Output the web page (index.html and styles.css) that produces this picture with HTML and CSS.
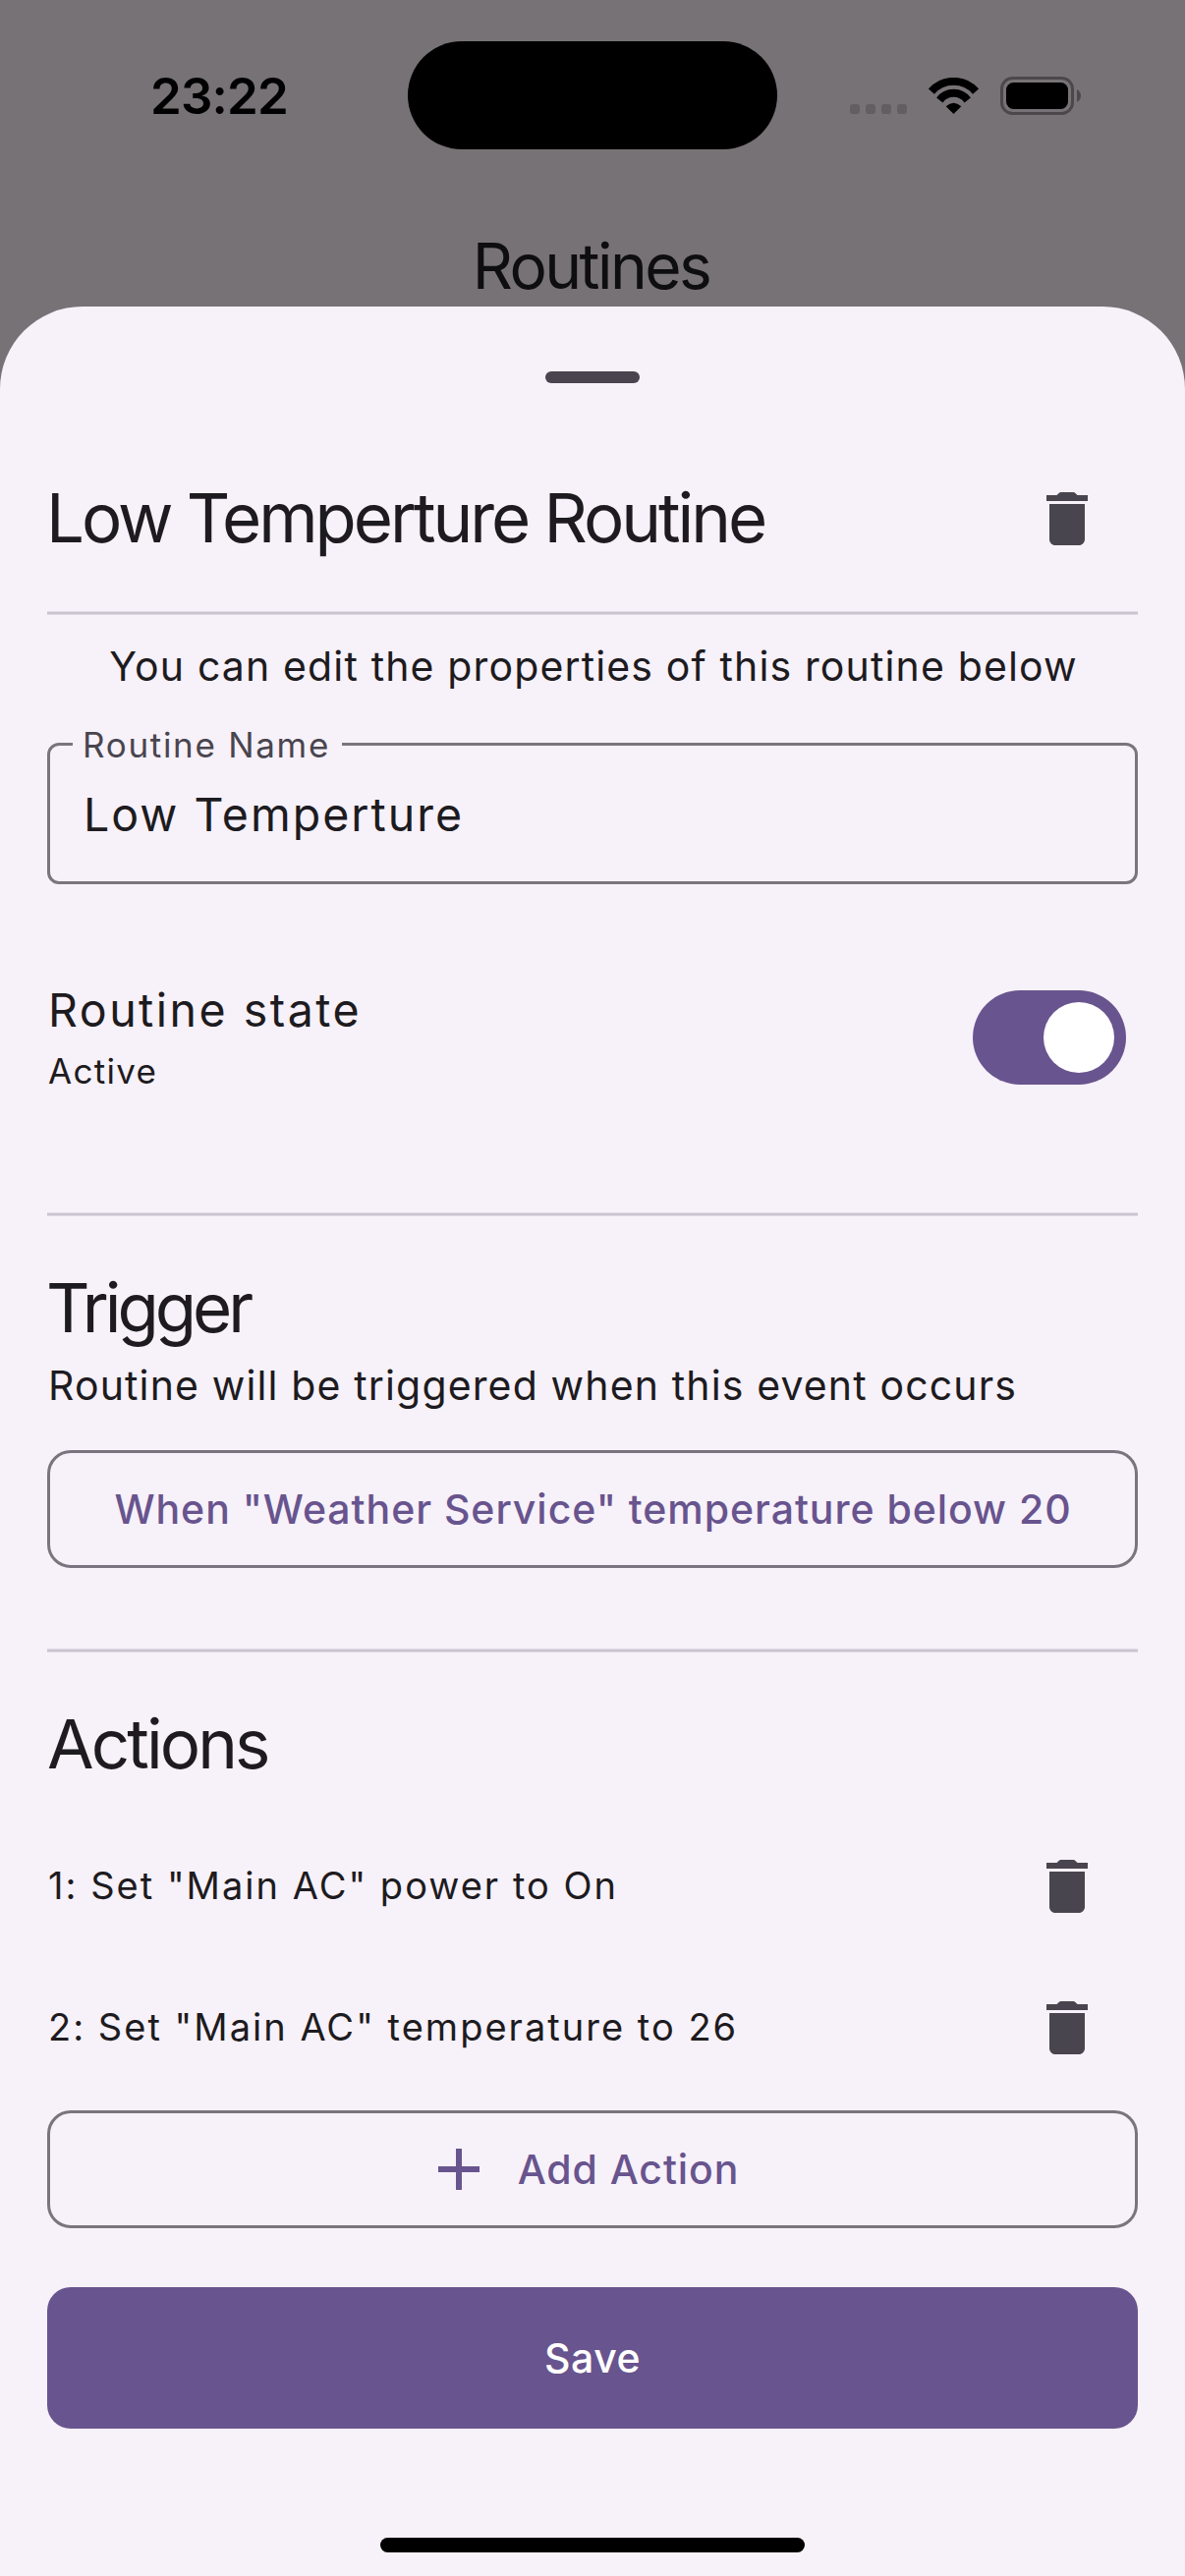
FILE: index.html
```
<!DOCTYPE html>
<html lang="en">
<head>
<meta charset="utf-8">
<title>Routines</title>
<link rel="stylesheet" href="styles.css">
</head>
<body>
<svg class="defs" width="0" height="0">
  <symbol id="trash" viewBox="0 0 24 24"><path d="M6 19c0 1.1.9 2 2 2h8c1.1 0 2-.9 2-2V7H6v12zM19 4h-3.5l-.7-.7c-.2-.2-.45-.3-.7-.3H9.9c-.25 0-.5.1-.7.3l-.7.7H5v2h14V4z"/></symbol>
  <symbol id="plus" viewBox="0 0 24 24"><path d="M19 13h-6v6h-2v-6H5v-2h6V5h2v6h6v2z"/></symbol>
</svg>
<header class="backdrop">
  <div class="status">
    <div class="time">23:22</div>
    <div class="island"></div>
    <div class="indicators">
      <svg class="cell" viewBox="0 0 58 10"><rect width="10" height="10" rx="3"/><rect x="16" width="10" height="10" rx="3"/><rect x="32" width="10" height="10" rx="3"/><rect x="48" width="10" height="10" rx="3"/></svg>
      <svg class="wifi" viewBox="0 0 51 37"><g fill="none" stroke="#000" stroke-width="8"><path d="M2.9 14.1A30 30 0 0 1 48.1 14.1"/><path d="M11.3 23A17.7 17.7 0 0 1 39.7 23"/></g><path d="M17.7 29.3Q25.5 22.3 33.3 29.3L25.5 37z"/></svg>
      <svg class="battery" viewBox="0 0 82 39"><rect x="1.5" y="1.5" width="72" height="36" rx="11" fill="none" stroke="#4b484b" stroke-width="3"/><rect x="6" y="6" width="63" height="27" rx="7.5"/><path d="M78 13Q82 15.5 82 19.5T78 26z" fill="#4b484b"/></svg>
    </div>
  </div>
  <h1 class="page-title">Routines</h1>
</header>
<main class="sheet">
  <div class="grip"></div>
  <div class="row">
    <h2 class="heading name">Low Temperture Routine</h2>
    <button class="icon-button"><svg class="icon"><use href="#trash"/></svg></button>
  </div>
  <div class="divider"></div>
  <p class="intro">You can edit the properties of this routine below</p>
  <div class="field">
    <div class="field-label">Routine Name</div>
    <div class="field-value">Low Temperture</div>
  </div>
  <div class="state">
    <div>
      <div class="state-title">Routine state</div>
      <div class="state-value">Active</div>
    </div>
    <div class="switch"><div class="thumb"></div></div>
  </div>
  <div class="divider"></div>
  <h2 class="heading trigger">Trigger</h2>
  <p class="description">Routine will be triggered when this event occurs</p>
  <button class="outlined event">When "Weather Service" temperature below 20</button>
  <div class="divider"></div>
  <h2 class="heading actions">Actions</h2>
  <div class="action-list">
    <div class="row">
      <span class="action">1: Set "Main AC" power to On</span>
      <button class="icon-button"><svg class="icon"><use href="#trash"/></svg></button>
    </div>
    <div class="row">
      <span class="action">2: Set "Main AC" temperature to 26</span>
      <button class="icon-button"><svg class="icon"><use href="#trash"/></svg></button>
    </div>
  </div>
  <button class="outlined add"><svg class="icon"><use href="#plus"/></svg>Add Action</button>
  <button class="save">Save</button>
  <div class="home-indicator"></div>
</main>
</body>
</html>
```
FILE: styles.css
```
* { box-sizing: border-box; }
body {
  margin: 0;
  width: 1206px;
  height: 2622px;
  display: flex;
  flex-direction: column;
  background: #777275;
  color: #1d1b20;
  font-family: Inter, "Liberation Sans", sans-serif;
  white-space: nowrap;
  overflow: hidden;
}
h1, h2, p { margin: 0; font-weight: 400; }
button { font-family: inherit; padding: 0; border: 0; background: none; }
svg { display: block; }
.defs { position: absolute; }

.backdrop { height: 312px; flex: none; }
.status {
  display: grid;
  grid-template-columns: 415px 376px 415px;
  align-items: center;
  padding-top: 42px;
  color: #000;
}
.time {
  padding: 2px 0 0 153px;
  font-size: 51px;
  line-height: 60px;
  font-weight: 600;
  letter-spacing: -0.8px;
}
.island { height: 110px; border-radius: 55px; background: #000; }
.indicators { display: flex; align-items: center; padding-left: 74px; }
.cell { width: 58px; height: 10px; margin: 28px 22px 0 0; fill: #625e62; }
.wifi { width: 51px; height: 37px; margin-right: 22px; }
.battery { width: 82px; height: 39px; }
.page-title {
  margin-top: 77px;
  padding-right: 3px;
  font-size: 64px;
  line-height: 84px;
  letter-spacing: -2.53px;
  text-align: center;
  color: #0e0d10;
}

.sheet {
  flex: 1;
  display: flex;
  flex-direction: column;
  padding: 66px 48px 0;
  border-radius: 84px 84px 0 0;
  background: #f7f1f9;
}
.grip {
  align-self: center;
  width: 96px;
  height: 12px;
  margin-bottom: 66px;
  border-radius: 6px;
  background: #49454f;
}
.row { display: flex; align-items: center; justify-content: space-between; height: 144px; }
.icon-button { display: flex; align-items: center; justify-content: center; width: 144px; height: 144px; color: #49454f; }
.icon { width: 72px; height: 72px; fill: currentColor; }
.divider {
  height: 4px;
  margin: 22px 0;
  border: solid #e1dae3;
  border-width: 1px 0;
  background: #cac4d0;
}
.heading { font-size: 69px; line-height: 94px; }
.name { margin-left: -1px; padding-bottom: 2px; letter-spacing: -3.04px; }
.trigger { margin: 24px 0 0 -1px; letter-spacing: -4px; }
.actions { margin: 24px 0 26px 0; letter-spacing: -2.9px; }
.intro { padding-left: 2px; font-size: 41px; line-height: 61px; letter-spacing: 1.14px; text-align: center; }

.field {
  position: relative;
  height: 144px;
  margin: 47px 0 72px;
  padding: 0 34px;
  border: 3px solid #79747e;
  border-radius: 12px;
  display: flex;
  align-items: center;
}
.field-label {
  position: absolute;
  top: -25px;
  left: 23px;
  width: 274px;
  padding-left: 10px;
  font-size: 35px;
  line-height: 48px;
  letter-spacing: 1.7px;
  color: #49454f;
  background: #f7f1f9;
}
.field-value { font-size: 46.5px; line-height: 60px; letter-spacing: 2px; padding-top: 2px; }

.state { display: flex; align-items: center; justify-content: space-between; height: 168px; padding-right: 12px; margin-bottom: 72px; }
.state-title { padding-left: 1px; font-size: 46.5px; line-height: 70px; letter-spacing: 2.5px; }
.state-value { padding: 0 0 2px 1px; font-size: 35px; line-height: 54px; letter-spacing: 1.3px; }
.switch { width: 156px; height: 96px; padding: 12px; border-radius: 48px; background: #68548e; display: flex; justify-content: flex-end; }
.thumb { width: 72px; height: 72px; border-radius: 50%; background: #fff; }

.description { margin-bottom: 34px; padding-left: 1px; font-size: 41px; line-height: 64px; letter-spacing: 1.14px; }
.outlined {
  display: flex;
  align-items: center;
  justify-content: center;
  height: 120px;
  border: 3px solid #79747e;
  border-radius: 24px;
  color: #68548e;
  font-size: 41px;
  font-weight: 500;
}
.event { margin-bottom: 60px; padding-left: 1px; letter-spacing: 0.96px; }
.action { padding: 0 0 2px 1px; font-size: 38px; line-height: 56px; letter-spacing: 2.02px; }
.action-list { margin-bottom: 12px; }
.add { gap: 24px; padding-right: 23px; letter-spacing: 0.91px; }
.save {
  height: 144px;
  margin: 60px 0 111px;
  border-radius: 24px;
  background: #68548e;
  color: #fff;
  font-size: 41px;
  font-weight: 500;
  letter-spacing: 0.53px;
}
.home-indicator { align-self: center; width: 432px; height: 15px; border-radius: 7.5px; background: #000; }
```
